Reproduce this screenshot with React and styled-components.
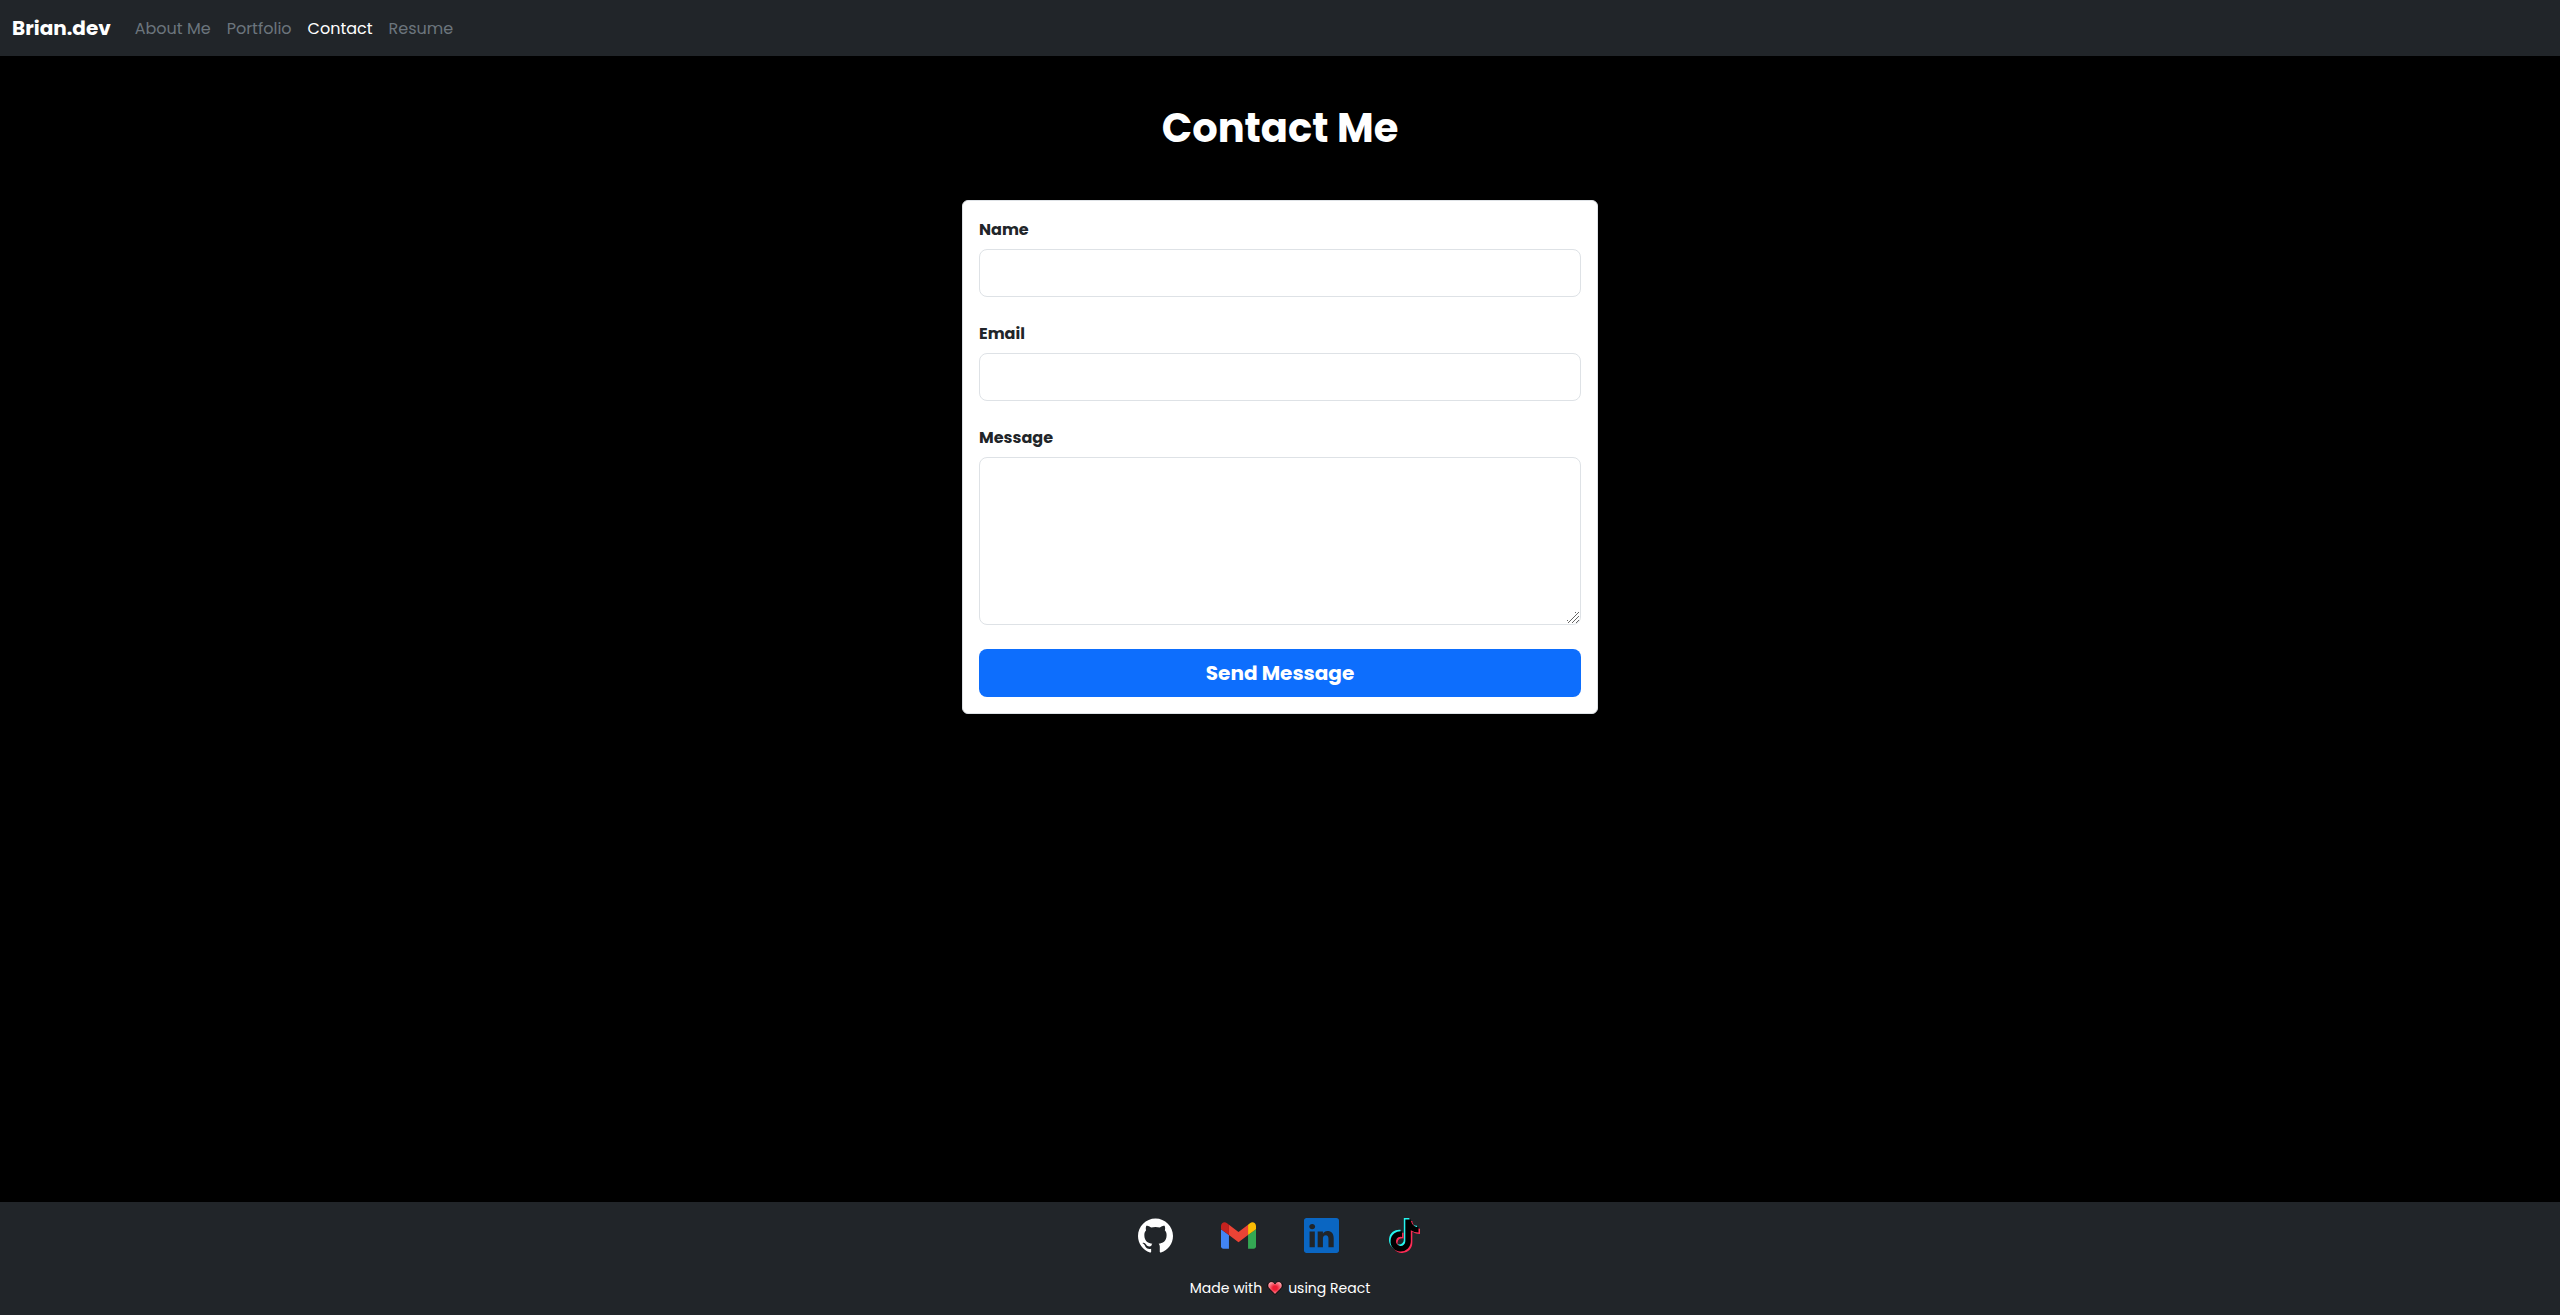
import React from "react";
import styled, { createGlobalStyle } from "styled-components";
import { SiGithub } from "react-icons/si";
import { BsLinkedin } from "react-icons/bs";

const GlobalStyle = createGlobalStyle`
  *, *::before, *::after { box-sizing: border-box; }
  body {
    margin: 0;
    background: #000;
    color: #212529;
    font: 400 16px/24px Poppins, Inter, "Open Sans", sans-serif;
  }
`;

const Page = styled.div`
  display: flex;
  flex-direction: column;
  min-height: 100vh;
`;

const Navbar = styled.nav`
  display: flex;
  align-items: center;
  gap: 16px;
  padding: 8px 12px;
  background: #212529;
`;

const Brand = styled.a`
  color: #fff;
  font-size: 20px;
  font-weight: 700;
  line-height: 40px;
  text-decoration: none;
`;

const NavList = styled.ul`
  display: flex;
  margin: 0;
  padding: 0;
  list-style: none;
`;

const NavLink = styled.a`
  display: block;
  padding: 9px 8px 7px;
  color: ${({ $active }) => ($active ? "#fff" : "#6c757d")};
  text-decoration: none;
`;

const Main = styled.main`
  display: flex;
  flex: 1;
  flex-direction: column;
  align-items: center;
  gap: 48px;
  padding: 48px 8px;
`;

const Title = styled.h1`
  margin: 0;
  color: #fff;
  font-size: 40px;
  font-weight: 700;
  line-height: 48px;
`;

const ContactForm = styled.form`
  display: flex;
  flex-direction: column;
  gap: 24px;
  width: 25%;
  min-width: 320px;
  padding: 16px;
  background: #fff;
  border: 1px solid #dee2e6;
  border-radius: 6px;
`;

const Field = styled.div`
  display: flex;
  flex-direction: column;
  gap: 6px;
`;

const Label = styled.label`
  font-weight: 700;
  line-height: 26px;
`;

const Input = styled.input`
  width: 100%;
  height: 48px;
  padding: 8px 16px;
  background: #fff;
  border: 1px solid #dee2e6;
  border-radius: 8px;
  color: inherit;
  font: inherit;
`;

const TextArea = styled.textarea`
  display: block;
  width: 100%;
  height: 168px;
  padding: 8px 16px;
  background: #fff;
  border: 1px solid #dee2e6;
  border-radius: 8px;
  color: inherit;
  font: inherit;
  resize: vertical;

  &::-webkit-resizer {
    background:
      linear-gradient(135deg, #fff 50%, transparent 50%) 0 0 / 14px 14px no-repeat,
      repeating-linear-gradient(315deg, transparent 0 8%, #666 8% 14%) 0 0 / 14px 14px no-repeat;
  }
`;

const SubmitButton = styled.button`
  height: 48px;
  border: 0;
  border-radius: 8px;
  background: #0d6efd;
  color: #fff;
  font: inherit;
  font-size: 20px;
  font-weight: 700;
  cursor: pointer;
`;

const Footer = styled.footer`
  display: flex;
  flex-direction: column;
  align-items: center;
  gap: 24px;
  padding: 16px 12px;
  background: #212529;
`;

const SocialLinks = styled.div`
  display: flex;
  gap: 48px;
`;

const SocialLink = styled.a`
  display: block;
  color: ${({ $color }) => $color};

  svg {
    display: block;
    width: 35px;
    height: 35px;
  }
`;

const Credit = styled.p`
  display: flex;
  align-items: center;
  gap: 5px;
  margin: 0;
  color: #fff;
  font-size: 14px;
  line-height: 22px;

  svg {
    width: 16px;
    height: 16px;
  }
`;

const GmailIcon = () => (
  <svg viewBox="52 42 88 66" aria-hidden="true">
    <path fill="#4285f4" d="M58 108h14V74L52 59v43c0 3.32 2.69 6 6 6" />
    <path fill="#34a853" d="M120 108h14c3.32 0 6-2.69 6-6V59l-20 15" />
    <path fill="#fbbc04" d="M120 48v26l20-15v-8c0-7.42-8.47-11.65-14.4-7.2" />
    <path fill="#ea4335" d="M72 74V48l24 18 24-18v26L96 92" />
    <path fill="#c5221f" d="M52 51v8l20 15V48l-5.6-4.2c-5.94-4.45-14.4-.22-14.4 7.2" />
  </svg>
);

const NOTE =
  "M448,209.91a210.06,210.06,0,0,1-122.77-39.25V349.38A162.55,162.55,0,1,1,185,188.31V278.2a74.62,74.62,0,1,0,52.23,71.18V0l88,0a121.18,121.18,0,0,0,1.86,22.17h0A122.18,122.18,0,0,0,381,102.39a121.43,121.43,0,0,0,67,20.14Z";

const TikTokIcon = () => (
  <svg viewBox="0 0 496 560" aria-hidden="true">
    <path fill="#25f4ee" d={NOTE} />
    <path fill="#fe2c55" d={NOTE} transform="translate(48 48)" />
    <path fill="#000" d={NOTE} transform="translate(24 24)" />
  </svg>
);

const HeartIcon = () => (
  <svg viewBox="0 0 16 16" role="img" aria-label="love">
    <defs>
      <radialGradient id="heart-fill">
        <stop offset="0.3" stopColor="#ee1c33" />
        <stop offset="1" stopColor="#ff9aa3" />
      </radialGradient>
    </defs>
    <path
      fill="url(#heart-fill)"
      stroke="#000"
      d="M8 14.5 2 8.6C-.5 5.6 1.1 1.600 4.300 1.600c1.600 0 2.900.8 3.700 2.200.8-1.400 2.100-2.200 3.700-2.200 3.200 0 4.800 4 2.300 7z"
    />
  </svg>
);

const links = ["About Me", "Portfolio", "Contact", "Resume"];

export default function App() {
  return (
    <Page>
      <GlobalStyle />
      <Navbar>
        <Brand href="#">Brian.dev</Brand>
        <NavList>
          {links.map((link) => (
            <li key={link}>
              <NavLink href="#" $active={link === "Contact"}>{link}</NavLink>
            </li>
          ))}
        </NavList>
      </Navbar>
      <Main>
        <Title>Contact Me</Title>
        <ContactForm>
          <Field>
            <Label htmlFor="name">Name</Label>
            <Input id="name" type="text" />
          </Field>
          <Field>
            <Label htmlFor="email">Email</Label>
            <Input id="email" type="email" />
          </Field>
          <Field>
            <Label htmlFor="message">Message</Label>
            <TextArea id="message" />
          </Field>
          <SubmitButton type="submit">Send Message</SubmitButton>
        </ContactForm>
      </Main>
      <Footer>
        <SocialLinks>
          <SocialLink href="#" aria-label="GitHub" $color="#fff"><SiGithub /></SocialLink>
          <SocialLink href="#" aria-label="Gmail"><GmailIcon /></SocialLink>
          <SocialLink href="#" aria-label="LinkedIn" $color="#0a66c2"><BsLinkedin /></SocialLink>
          <SocialLink href="#" aria-label="TikTok"><TikTokIcon /></SocialLink>
        </SocialLinks>
        <Credit>
          Made with <HeartIcon /> using React
        </Credit>
      </Footer>
    </Page>
  );
}
